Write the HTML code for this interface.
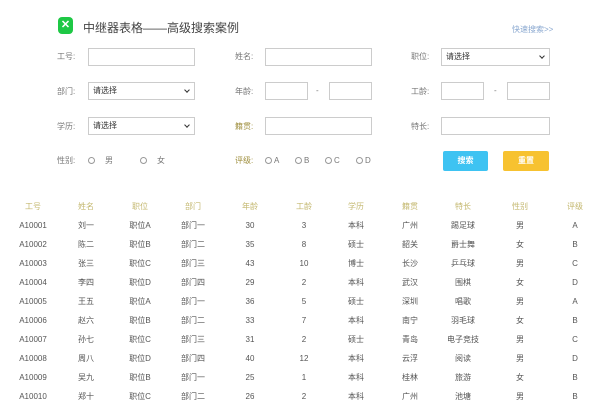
<!DOCTYPE html><html><head><meta charset="utf-8"><style>
body{margin:0;width:607px;height:405px;background:#fff;position:relative;overflow:hidden;font-family:"Liberation Sans","Noto Sans CJK SC",sans-serif;color:#555;font-size:8px}
.a{position:absolute}
.in{position:absolute;border:1px solid #ccc;background:#fff;box-sizing:border-box;height:18px}
.sel{font-size:8px;color:#333;padding-left:4px;line-height:16px}
.sel:after{content:"";position:absolute;right:5px;top:5px;width:3px;height:3px;border-right:1.3px solid #333;border-bottom:1.3px solid #333;transform:rotate(45deg)}
.lb{position:absolute;font-size:8px;color:#777;line-height:10px}
.r{position:absolute;width:5px;height:5px;border:1px solid #999;border-radius:50%}
.h{position:absolute;top:202px;color:#c4b870;font-size:8px;line-height:10px;width:60px;margin-left:-30px;text-align:center}
.c{position:absolute;font-size:8px;line-height:10px;height:10px;color:#555;width:60px;margin-left:-30px;text-align:center}
</style></head><body>
<div class="a" style="left:58px;top:17px;width:15px;height:17px;background:#1ec845;border-radius:4px;color:#fff;font-size:11px;font-weight:bold;text-align:center;line-height:17px">✕</div>
<div class="a" style="left:83px;top:19px;font-size:12px;color:#444">中继器表格——高级搜索案例</div>
<div class="a" style="left:512px;top:24px;font-size:8px;color:#8aa8d0">快速搜索&gt;&gt;</div>

<div class="lb" style="left:57px;top:52px">工号:</div><div class="in" style="left:88px;top:48px;width:107px"></div>
<div class="lb" style="left:235px;top:52px">姓名:</div><div class="in" style="left:265px;top:48px;width:107px"></div>
<div class="lb" style="left:411px;top:52px">职位:</div><div class="in sel" style="left:441px;top:48px;width:109px">请选择</div>

<div class="lb" style="left:57px;top:87px">部门:</div><div class="in sel" style="left:88px;top:82px;width:107px">请选择</div>
<div class="lb" style="left:235px;top:87px">年龄:</div><div class="in" style="left:265px;top:82px;width:43px"></div><div class="lb" style="left:316px;top:86px">-</div><div class="in" style="left:329px;top:82px;width:43px"></div>
<div class="lb" style="left:411px;top:87px">工龄:</div><div class="in" style="left:441px;top:82px;width:43px"></div><div class="lb" style="left:494px;top:86px">-</div><div class="in" style="left:507px;top:82px;width:43px"></div>

<div class="lb" style="left:57px;top:122px">学历:</div><div class="in sel" style="left:88px;top:117px;width:107px">请选择</div>
<div class="lb" style="left:235px;top:122px;color:#a09040">籍贯:</div><div class="in" style="left:265px;top:117px;width:107px"></div>
<div class="lb" style="left:411px;top:122px">特长:</div><div class="in" style="left:441px;top:117px;width:109px"></div>

<div class="lb" style="left:57px;top:156px">性别:</div>
<div class="r" style="left:88px;top:157px"></div><div class="lb" style="left:105px;top:156px">男</div>
<div class="r" style="left:140px;top:157px"></div><div class="lb" style="left:157px;top:156px">女</div>
<div class="lb" style="left:235px;top:156px;color:#a09040">评级:</div>
<div class="r" style="left:265px;top:157px"></div><div class="lb" style="left:274px;top:156px">A</div>
<div class="r" style="left:295px;top:157px"></div><div class="lb" style="left:304px;top:156px">B</div>
<div class="r" style="left:325px;top:157px"></div><div class="lb" style="left:334px;top:156px">C</div>
<div class="r" style="left:356px;top:157px"></div><div class="lb" style="left:365px;top:156px">D</div>
<div class="a" style="left:443px;top:151px;width:45px;height:20px;background:#3ec3f2;border-radius:2px;color:#fff;text-align:center;line-height:20px;font-weight:bold">搜索</div>
<div class="a" style="left:503px;top:151px;width:46px;height:20px;background:#f7c230;border-radius:2px;color:#fff;text-align:center;line-height:20px;font-weight:bold">重置</div>

<div class="h" style="left:33px">工号</div><div class="h" style="left:86px">姓名</div><div class="h" style="left:140px">职位</div><div class="h" style="left:193px">部门</div><div class="h" style="left:250px">年龄</div><div class="h" style="left:304px">工龄</div><div class="h" style="left:356px">学历</div><div class="h" style="left:410px">籍贯</div><div class="h" style="left:463px">特长</div><div class="h" style="left:520px">性别</div><div class="h" style="left:575px">评级</div>
<div id="t"></div>
<script>
var d=[["A10001","刘一","职位A","部门一",30,3,"本科","广州","踢足球","男","A"],["A10002","陈二","职位B","部门二",35,8,"硕士","韶关","爵士舞","女","B"],["A10003","张三","职位C","部门三",43,10,"博士","长沙","乒乓球","男","C"],["A10004","李四","职位D","部门四",29,2,"本科","武汉","围棋","女","D"],["A10005","王五","职位A","部门一",36,5,"硕士","深圳","唱歌","男","A"],["A10006","赵六","职位B","部门二",33,7,"本科","南宁","羽毛球","女","B"],["A10007","孙七","职位C","部门三",31,2,"硕士","青岛","电子竞技","男","C"],["A10008","周八","职位D","部门四",40,12,"本科","云浮","阅读","男","D"],["A10009","吴九","职位B","部门一",25,1,"本科","桂林","旅游","女","B"],["A10010","郑十","职位C","部门二",26,2,"本科","广州","池塘","男","B"]];
var x=[33,86,140,193,250,304,356,410,463,520,575],h="";
d.forEach(function(r,i){var y=Math.round(221+i*19);r.forEach(function(v,j){h+='<div class="c" style="left:'+x[j]+'px;top:'+y+'px">'+v+'</div>';});});
document.getElementById("t").innerHTML=h;
</script>
</body></html>
